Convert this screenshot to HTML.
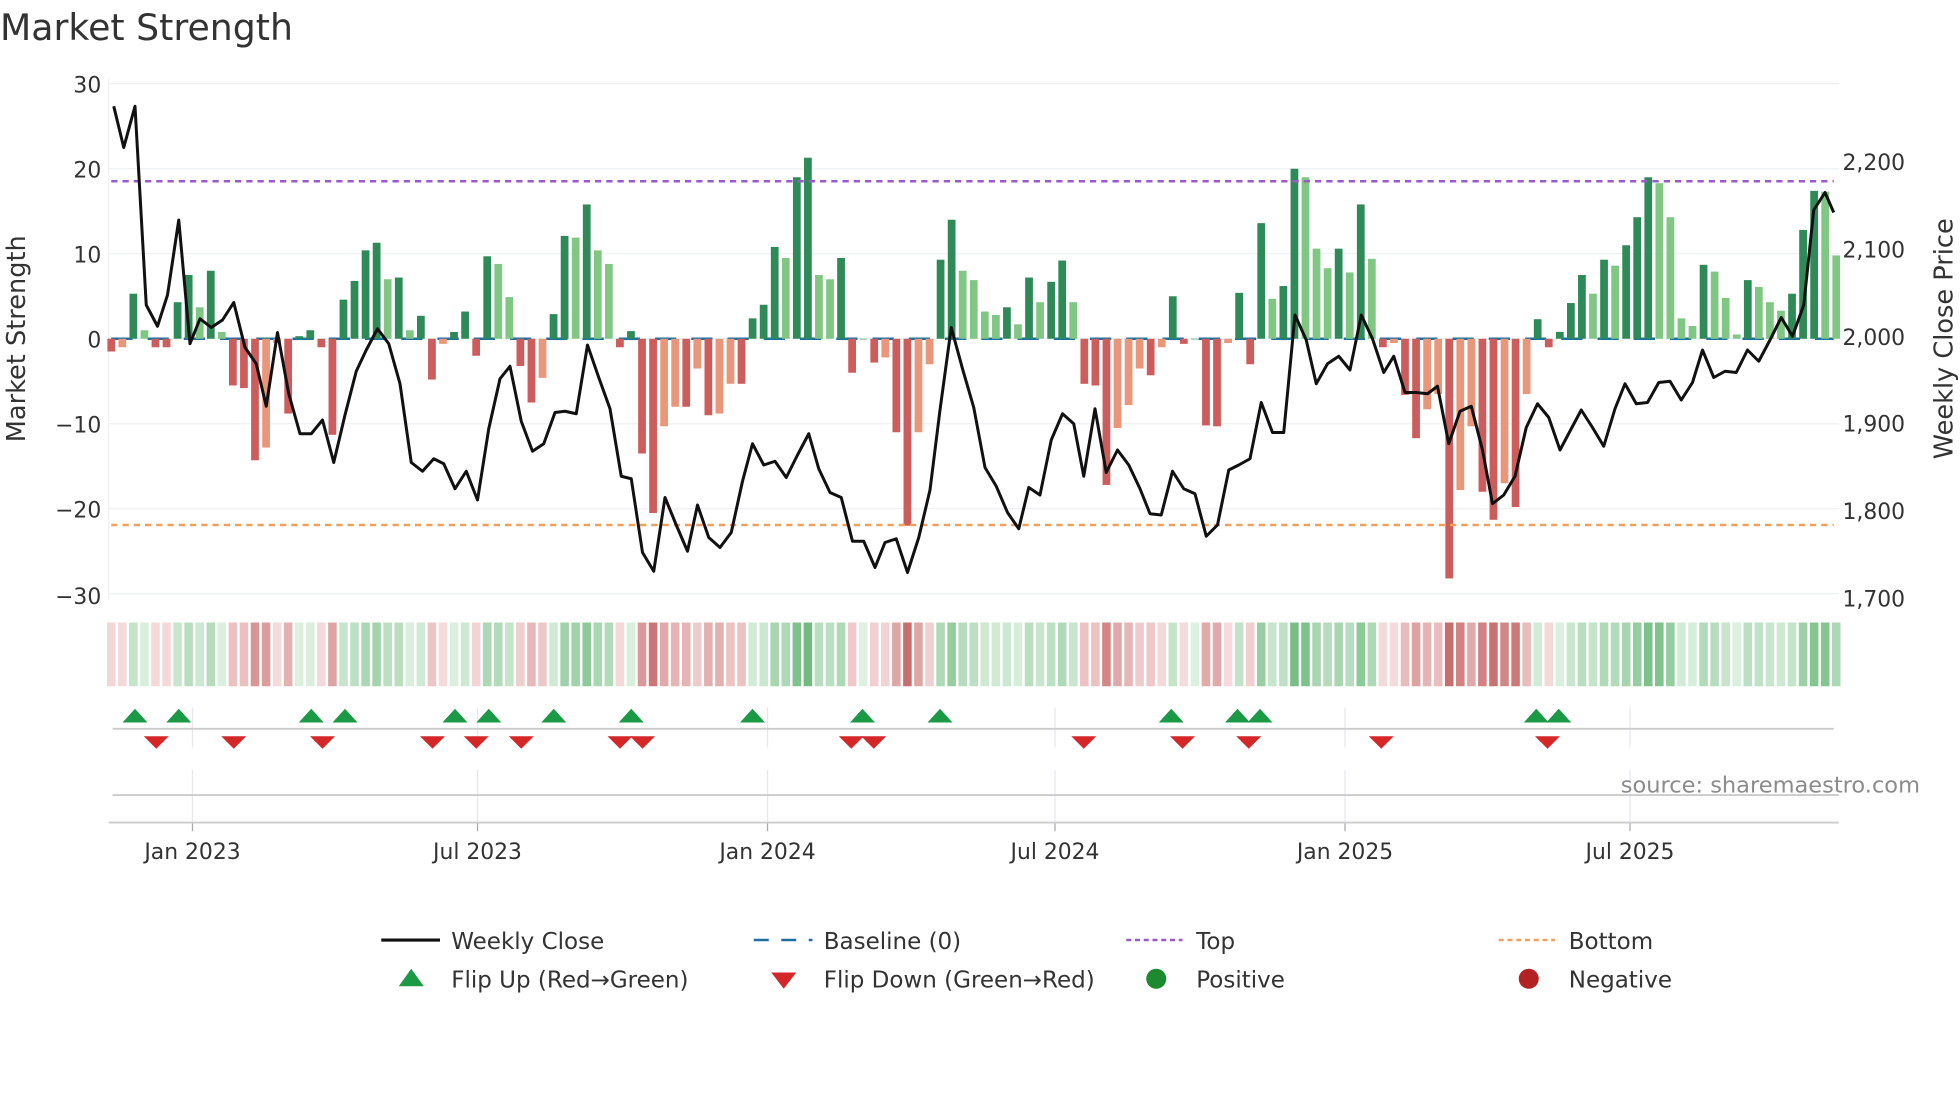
<!DOCTYPE html>
<html><head><meta charset="utf-8">
<style>
html,body{margin:0;padding:0;background:#fff;}
svg{display:block;font-family:"DejaVu Sans","Liberation Sans",sans-serif;}
</style></head>
<body>
<svg id="c" width="1960" height="1102" viewBox="0 0 1568 881.6" xmlns="http://www.w3.org/2000/svg">
<text x="0" y="32" font-size="29" fill="#333">Market Strength</text>
<g id="grid"></g>
<g id="bars"></g>
<g id="strip"></g>
<g id="mk"></g>
<g font-size="17.5" fill="#333">
<text x="81" y="74" text-anchor="end">30</text>
<text x="81" y="142" text-anchor="end">20</text>
<text x="81" y="210" text-anchor="end">10</text>
<text x="81" y="278" text-anchor="end">0</text>
<text x="81" y="346" text-anchor="end">−10</text>
<text x="81" y="414" text-anchor="end">−20</text>
<text x="81" y="483" text-anchor="end">−30</text>
<text x="1474" y="136">2,200</text>
<text x="1474" y="206">2,100</text>
<text x="1474" y="276">2,000</text>
<text x="1474" y="345">1,900</text>
<text x="1474" y="415">1,800</text>
<text x="1474" y="485">1,700</text>
<text x="154" y="687" text-anchor="middle">Jan 2023</text>
<text x="382" y="687" text-anchor="middle">Jul 2023</text>
<text x="614" y="687" text-anchor="middle">Jan 2024</text>
<text x="844" y="687" text-anchor="middle">Jul 2024</text>
<text x="1076" y="687" text-anchor="middle">Jan 2025</text>
<text x="1304" y="687" text-anchor="middle">Jul 2025</text>
</g>
<text transform="translate(20,271) rotate(-90)" font-size="20.5" fill="#333" text-anchor="middle">Market Strength</text>
<text transform="translate(1562,271) rotate(-90)" font-size="20.5" fill="#333" text-anchor="middle">Weekly Close Price</text>
<text x="1536" y="634" font-size="18" fill="#8c8c8c" text-anchor="end">source: sharemaestro.com</text>
<g font-size="18.4" fill="#333">
<line x1="305" y1="752" x2="352" y2="752" stroke="#111" stroke-width="2.5"/>
<text x="361" y="759">Weekly Close</text>
<line x1="603" y1="752" x2="650" y2="752" stroke="#1f6f9f" stroke-width="2" stroke-dasharray="12,10"/>
<text x="659" y="759">Baseline (0)</text>
<line x1="901" y1="752" x2="946" y2="752" stroke="#9b59d0" stroke-width="2" stroke-dasharray="4,3"/>
<text x="957" y="759">Top</text>
<line x1="1199" y1="752" x2="1244" y2="752" stroke="#f0a05a" stroke-width="2" stroke-dasharray="4,3"/>
<text x="1255" y="759">Bottom</text>
<polygon points="319,789 329,775 339,789" fill="#1a9a45"/>
<text x="361" y="790">Flip Up (Red→Green)</text>
<polygon points="617,778 637,778 627,791" fill="#d62728"/>
<text x="659" y="790">Flip Down (Green→Red)</text>
<circle cx="925" cy="783" r="8" fill="#1e8a2e"/>
<text x="957" y="790">Positive</text>
<circle cx="1223" cy="783" r="8" fill="#b22222"/>
<text x="1255" y="790">Negative</text>
</g>
</svg>
<script>
var NS="http://www.w3.org/2000/svg";
function el(p,t,a){var e=document.createElementNS(NS,t);for(var k in a)e.setAttribute(k,a[k]);p.appendChild(e);return e;}
var v=[-1.5,-1,5.3,1,-1,-1,4.3,7.5,3.7,8,0.8,-5.5,-5.8,-14.3,-12.8,-0.5,-8.8,0.3,1,-1,-11.3,4.6,6.8,10.4,11.3,7,7.2,1,2.7,-4.8,-0.6,0.8,3.2,-2,9.7,8.8,4.9,-3.2,-7.5,-4.6,2.9,12.1,11.9,15.8,10.4,8.8,-1,0.9,-13.5,-20.5,-10.3,-8,-8,-3.5,-9,-8.8,-5.3,-5.3,2.4,4,10.8,9.5,19,21.3,7.5,7,9.5,-4,0,-2.8,-2.2,-11,-22,-11,-3,9.3,14,8,6.9,3.2,2.8,3.7,1.7,7.2,4.3,6.7,9.2,4.3,-5.3,-5.5,-17.2,-10.5,-7.8,-3.5,-4.3,-1,5,-0.6,0,-10.2,-10.3,-0.5,5.4,-3,13.6,4.7,6.2,20,19,10.6,8.3,10.6,7.8,15.8,9.4,-1,-0.5,-6.6,-11.7,-8.3,-6.5,-28.2,-17.8,-10.3,-18,-21.3,-17,-19.8,-6.5,2.3,-1,0.8,4.2,7.5,5.3,9.3,8.6,11,14.3,19,18.3,14.3,2.4,1.5,8.7,7.9,4.8,0.5,6.9,6.1,4.3,3.3,5.3,12.8,17.4,17.3,9.8];
var n=v.length,x0=89,x1=1469,dx=(x1-x0)/(n-1),bw=6.2;
function Y(s){return 271-s*6.8;}
var g=document.getElementById('grid');
[30,20,10,0,-10,-20,-30].forEach(function(s){el(g,'line',{x1:87,x2:1471,y1:Y(s),y2:Y(s),stroke:'#eef0f4','stroke-width':1});});
[154,382,614,844,1076,1304].forEach(function(x){
el(g,'line',{x1:x,x2:x,y1:566,y2:598,stroke:'#e6e8ee','stroke-width':1});
el(g,'line',{x1:x,x2:x,y1:616,y2:658,stroke:'#e6e8ee','stroke-width':1});
el(g,'line',{x1:x,x2:x,y1:658,y2:665,stroke:'#aaa','stroke-width':1});});
el(g,'line',{x1:87,x2:87,y1:62,y2:480,stroke:'#eef0f4'});
el(g,'line',{x1:90,x2:1467,y1:583,y2:583,stroke:'#ccc','stroke-width':1.5});
el(g,'line',{x1:90,x2:1471,y1:636,y2:636,stroke:'#ccc','stroke-width':1.5});
el(g,'line',{x1:87,x2:1471,y1:658,y2:658,stroke:'#ccc','stroke-width':1.5});
var b=document.getElementById('bars');
el(b,'line',{x1:89,x2:1467,y1:271,y2:271,stroke:'#1f6f9f','stroke-width':2,'stroke-dasharray':'17,12'});
var st=document.getElementById('strip');
function mix(a,c,t){return 'rgb('+[0,1,2].map(function(i){return Math.round(a[i]+(c[i]-a[i])*t);}).join(',')+')';}
for(var i=0;i<n;i++){
 var s=v[i],p=i?v[i-1]:0,x=x0+i*dx,col;
 if(s>=0)col=(s>=p)?'#2e8b57':'#81c784';else col=(s<=p)?'#cd5c5c':'#e9967a';
 var y=Y(Math.max(s,0)),h=Math.abs(s)*6.8;
 el(b,'rect',{x:x-bw/2,y:y,width:bw,height:Math.max(h,0.5),fill:col});
 var t=Math.min(Math.abs(s)/22,1);
 var sc=s>=0?mix([222,241,225],[110,185,125],t):mix([246,222,222],[200,110,110],t);
 el(st,'rect',{x:x-dx/2+1,y:498,width:dx-2,height:51,fill:sc});
}
el(b,'line',{x1:89,x2:1467,y1:145,y2:145,stroke:'#9b59d0','stroke-width':2,'stroke-dasharray':'5,4'});
el(b,'line',{x1:89,x2:1467,y1:420,y2:420,stroke:'#f0a05a','stroke-width':2,'stroke-dasharray':'5,4'});
var L=[91,85,99,118,108,85,117,244,126,261,134,236,143,176,152,275,160,255,169,262,178,256,187,242,196,278,205,291,213,325,222,266,231,315,240,347,249,347,258,336,267,370,276,332,285,297,293,280,302,263,311,275,320,307,329,370,338,377,347,367,355,371,364,391,373,377,382,400,391,343,400,303,408,293,417,337,426,361,435,355,444,330,452,329,461,331,470,276,479,302,488,327,497,381,505,383,514,442,523,457,532,398,541,420,550,441,558,404,567,430,576,438,585,426,594,385,602,355,611,372,620,369,629,382,638,364,647,347,655,375,664,394,673,398,682,433,691,433,700,454,708,434,717,431,726,458,735,430,744,392,752,328,761,262,770,295,779,326,788,374,797,389,806,410,815,423,823,390,832,396,841,352,850,331,859,339,867,381,876,327,885,378,894,360,903,372,912,391,920,411,929,412,938,377,947,391,956,395,965,429,974,420,983,376,991,372,1000,367,1009,322,1018,346,1027,346,1036,252,1045,272,1053,307,1062,291,1071,285,1080,296,1089,252,1098,271,1107,298,1115,285,1124,314,1133,314,1142,315,1150,309,1159,355,1168,329,1177,325,1186,360,1194,403,1203,396,1212,381,1221,342,1230,323,1239,334,1248,360,1257,343,1265,328,1274,342,1283,357,1292,327,1300,307,1309,323,1318,322,1327,306,1336,305,1345,320,1354,306,1362,280,1371,302,1380,297,1389,298,1398,280,1407,289,1416,272,1425,254,1434,269,1443,244,1451,168,1460,154,1467,170];
var pts=[];for(var i=0;i<L.length;i+=2)pts.push(L[i]+','+L[i+1]);
el(b,'polyline',{points:pts.join(' '),fill:'none',stroke:'#111','stroke-width':2.4,'stroke-linejoin':'round'});
var m=document.getElementById('mk');
[108,143,249,276,364,391,443,505,602,690,752,937,990,1008,1229,1247].forEach(function(x){el(m,'polygon',{points:(x-10)+',578 '+x+',567 '+(x+10)+',578',fill:'#1a9a45'});});
[125,187,258,346,381,417,496,514,681,699,867,946,999,1105,1238].forEach(function(x){el(m,'polygon',{points:(x-10)+',589 '+(x+10)+',589 '+x+',599',fill:'#d62728'});});
</script>
</body></html>
